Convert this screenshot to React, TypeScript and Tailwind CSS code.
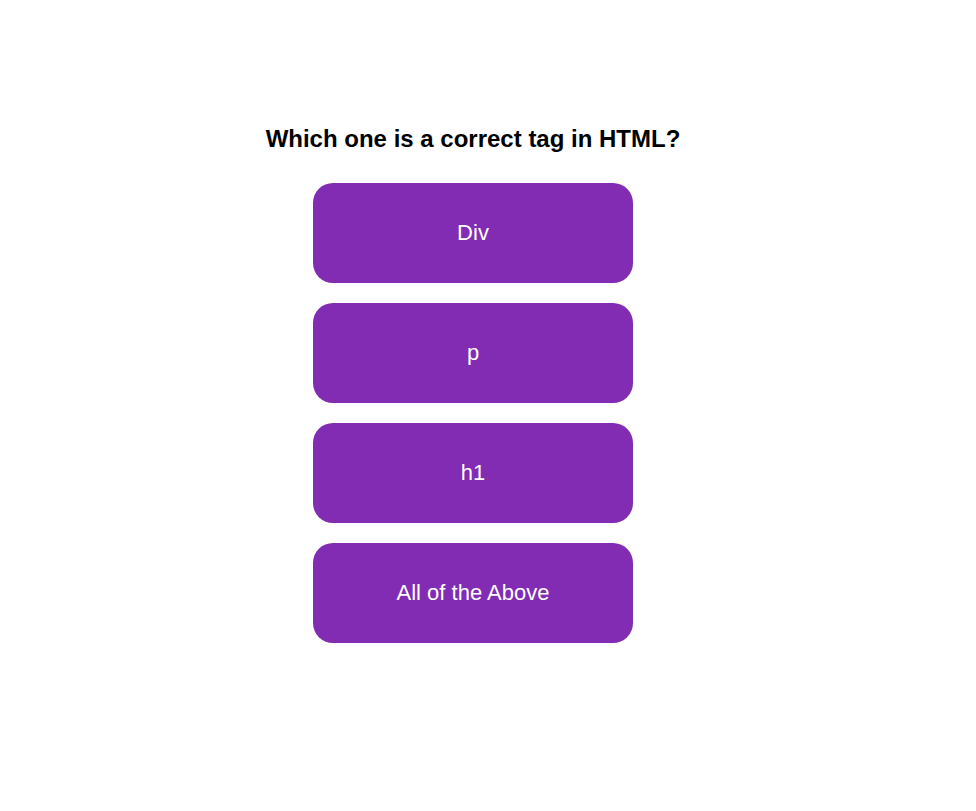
export default function App() {
  const options = ["Div", "p", "h1", "All of the Above"];
  return (
    <div className="min-h-[811px] bg-white flex flex-col items-center pt-[123px] pr-[30px] font-['Liberation_Sans',Arial,sans-serif]">
      <h2 className="text-[24px] leading-[32px] font-bold text-black">Which one is a correct tag in HTML?</h2>
      <div className="mt-[28px] flex flex-col gap-5">
        {options.map((o) => (
          <button
            key={o}
            className="w-[320px] h-[100px] rounded-[20px] bg-[#822cb4] text-white text-[22px] pb-[2px] flex items-center justify-center"
          >
            {o}
          </button>
        ))}
      </div>
    </div>
  );
}
